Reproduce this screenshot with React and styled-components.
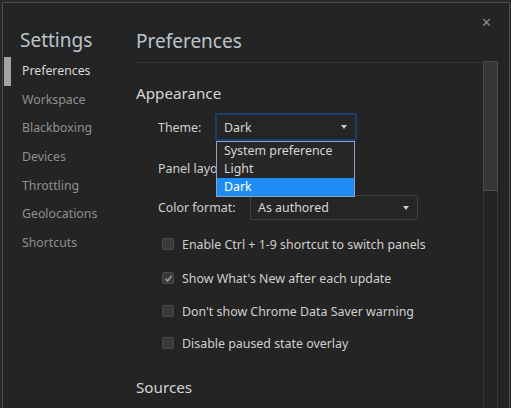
import styled, { createGlobalStyle } from "styled-components";

const Global = createGlobalStyle`
  html, body {
    margin: 0;
    padding: 0;
    background: #292929;
    width: 511px;
    height: 408px;
    overflow: hidden;
    font-family: "Noto Sans", "Open Sans", sans-serif;
  }
`;

const Frame = styled.div`
  position: relative;
  margin: 2px 1px 0 2px;
  height: 406px;
  box-sizing: border-box;
  border: 1px solid #4b4b4b;
  border-bottom: none;
  background: #242424;
  display: flex;
  overflow: hidden;
`;

const TopMark = styled.div`
  position: absolute;
  top: -2px;
  left: 296px;
  width: 76px;
  height: 2px;
  background: #050505;
`;

const Sidebar = styled.div`
  width: 133px;
  flex-shrink: 0;
  display: flex;
  flex-direction: column;
`;

const SideTitle = styled.div`
  font-size: 19px;
  line-height: 24px;
  color: #bcc4cc;
  padding: 25px 0 5px 17px;
`;

const NavItem = styled.div`
  position: relative;
  height: 28.7px;
  line-height: 28.7px;
  font-size: 12.3px;
  padding-left: 19px;
  color: ${(p) => (p.$active ? "#d8d8d8" : "#8f8f8f")};

  &::before {
    content: "";
    display: ${(p) => (p.$active ? "block" : "none")};
    position: absolute;
    left: 1px;
    top: 0;
    width: 7px;
    height: 100%;
    background: #a3a3a3;
  }
`;

const Main = styled.div`
  flex: 1;
  display: flex;
  flex-direction: column;
  min-width: 0;
`;

const Header = styled.div`
  height: 60px;
  box-sizing: border-box;
  margin-right: 26px;
  border-bottom: 1px solid #363636;
  font-size: 19px;
  color: #bcc4cc;
  padding-top: 26px;
  line-height: 24px;
`;

const Close = styled.div`
  position: absolute;
  right: 17px;
  top: 12px;
  font-size: 13px;
  color: #8a8a8a;
  line-height: 14px;
`;

const Body = styled.div`
  flex: 1;
  display: flex;
  min-height: 0;
`;

const Content = styled.div`
  flex: 1;
  padding-top: 18px;
`;

const SectionTitle = styled.div`
  font-size: 15.2px;
  line-height: 24px;
  color: #d6d6d6;
  margin-top: ${(p) => p.$top || 0}px;
  margin-bottom: ${(p) => p.$gap || 0}px;
`;

const Row = styled.div`
  display: flex;
  align-items: center;
  height: ${(p) => p.$h}px;
  margin-bottom: ${(p) => p.$gap}px;
  padding-left: 22px;
  font-size: 12.4px;
  color: #cfcfcf;
`;

const Label = styled.span`
  width: ${(p) => p.$w}px;
  flex-shrink: 0;
`;

const SelectBox = styled.div`
  position: relative;
  width: ${(p) => p.$w}px;
  height: ${(p) => p.$h}px;
  box-sizing: border-box;
  border: ${(p) => (p.$focus ? "2px solid #1b3d70" : "1px solid #404040")};
  border-radius: 2px;
  padding-left: 7px;
  display: flex;
  align-items: center;
  color: #d6d6d6;
  background: #252525;
`;

const Arrow = styled.span`
  position: absolute;
  right: 8px;
  top: 50%;
  margin-top: -2px;
  width: 0;
  height: 0;
  border-left: 3.5px solid transparent;
  border-right: 3.5px solid transparent;
  border-top: 4px solid #d0d0d0;
`;

const Menu = styled.div`
  position: absolute;
  top: 26px;
  left: -1px;
  width: 139px;
  box-sizing: border-box;
  border: 1px solid #8ea3c4;
  background: #272727;
  z-index: 5;
`;

const Option = styled.div`
  height: 18px;
  line-height: 18px;
  padding-left: 7px;
  font-size: 12.4px;
  color: ${(p) => (p.$sel ? "#ffffff" : "#d6d6d6")};
  background: ${(p) => (p.$sel ? "#1e8cf5" : "transparent")};
`;

const CheckRow = styled.label`
  display: flex;
  align-items: center;
  height: 22px;
  margin-bottom: ${(p) => p.$gap}px;
  padding-left: 26px;
  font-size: 12.4px;
  color: #cfcfcf;
`;

const Box = styled.span`
  width: 10px;
  height: 10px;
  border: 1px solid #4a4a4a;
  border-radius: 2px;
  background: #3a3a3a;
  margin-right: 8px;
  display: flex;
  align-items: center;
  justify-content: center;
`;

const Scrollbar = styled.div`
  width: 13px;
  margin-right: 11px;
  border-left: 1px solid #383838;
  border-right: 1px solid #383838;
  position: relative;
`;

const Thumb = styled.div`
  position: absolute;
  top: -2px;
  left: -1px;
  right: -1px;
  height: 128px;
  border: 1px solid #4c4c4c;
  background: #373737;
  border-radius: 1px;
`;

const nav = [
  "Preferences",
  "Workspace",
  "Blackboxing",
  "Devices",
  "Throttling",
  "Geolocations",
  "Shortcuts",
];

const checks = [
  ["Enable Ctrl + 1-9 shortcut to switch panels", false, 12],
  ["Show What's New after each update", true, 11],
  ["Don't show Chrome Data Saver warning", false, 10],
  ["Disable paused state overlay", false, 0],
];

export default function App() {
  return (
    <>
      <Global />
      <Frame>
        <TopMark />
        <Sidebar>
          <SideTitle>Settings</SideTitle>
          {nav.map((n, i) => (
            <NavItem key={n} $active={i === 0}>
              {n}
            </NavItem>
          ))}
        </Sidebar>
        <Main>
          <Header>Preferences</Header>
          <Close>✕</Close>
          <Body>
            <Content>
              <SectionTitle $gap={8}>Appearance</SectionTitle>
              <Row $h={28} $gap={13}>
                <Label $w={57}>Theme:</Label>
                <SelectBox $w={142} $h={28} $focus>
                  Dark
                  <Arrow />
                  <Menu>
                    <Option>System preference</Option>
                    <Option>Light</Option>
                    <Option $sel>Dark</Option>
                  </Menu>
                </SelectBox>
              </Row>
              <Row $h={28} $gap={13}>
                <Label $w={92}>Panel layout:</Label>
              </Row>
              <Row $h={25} $gap={13}>
                <Label $w={92}>Color format:</Label>
                <SelectBox $w={168} $h={25}>
                  As authored
                  <Arrow />
                </SelectBox>
              </Row>
              {checks.map(([t, c, g]) => (
                <CheckRow key={t} $gap={g}>
                  <Box>
                    {c && (
                      <svg width="9" height="9" viewBox="0 0 9 9">
                        <path d="M1.5 4.8 L3.6 7 L7.6 1.8" stroke="#9a9a9a" strokeWidth="1.6" fill="none" />
                      </svg>
                    )}
                  </Box>
                  {t}
                </CheckRow>
              ))}
              <SectionTitle $top={21}>Sources</SectionTitle>
            </Content>
            <Scrollbar>
              <Thumb />
            </Scrollbar>
          </Body>
        </Main>
      </Frame>
    </>
  );
}
